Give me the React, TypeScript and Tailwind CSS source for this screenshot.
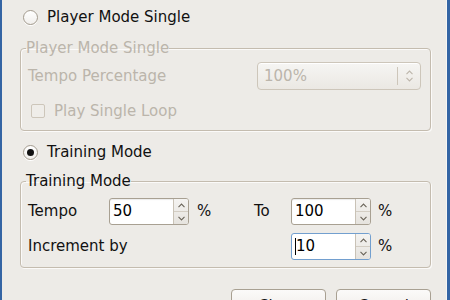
import type { ReactNode } from 'react';

function Radio({ checked }: { checked?: boolean }) {
  return (
    <span className="flex h-[15px] w-[15px] shrink-0 items-center justify-center rounded-full border border-[#a39b8e] bg-gradient-to-b from-white to-[#f1efec] shadow-[0_1px_0_#fff]">
      {checked ? <span className="h-[7px] w-[7px] rounded-full bg-[#111]" /> : null}
    </span>
  );
}

function Chevron({ up, color = '#6b655b' }: { up?: boolean; color?: string }) {
  return (
    <svg width="7" height="5" viewBox="0 0 7 5" className="block">
      <path
        d={up ? 'M0.5 4.2 L3.5 1 L6.5 4.2' : 'M0.5 0.8 L3.5 4 L6.5 0.8'}
        fill="none"
        stroke={color}
        strokeWidth="1.1"
      />
    </svg>
  );
}

function SpinBox({ value, focused }: { value: ReactNode; focused?: boolean }) {
  return (
    <div
      className={
        focused
          ? 'flex h-[27px] w-[80px] overflow-hidden rounded-[3px] border border-[#729fcf] bg-white'
          : 'flex h-[27px] w-[80px] overflow-hidden rounded-[3px] border border-[#a8a092] bg-white shadow-[inset_0_1px_1px_rgba(0,0,0,0.08)]'
      }
    >
      <div className="flex flex-1 items-center pl-[3px] text-black">{value}</div>
      <div className="flex w-[15px] flex-col border-l border-[#c9c2b6] bg-gradient-to-b from-[#f4f3f1] to-[#e6e3de]">
        <div className="flex flex-1 items-center justify-center border-b border-[#d3cdc3]">
          <Chevron up />
        </div>
        <div className="flex flex-1 items-center justify-center">
          <Chevron />
        </div>
      </div>
    </div>
  );
}

function Group({ title, disabled, children }: { title: string; disabled?: boolean; children: ReactNode }) {
  return (
    <fieldset className="rounded-[4px] border border-[#c4bcaf] shadow-[1px_1px_0_#fbfaf9,inset_1px_1px_0_#fbfaf9]">
      <legend className={disabled ? 'ml-[5px] leading-[16px] text-[#bbb5ab]' : 'ml-[5px] leading-[16px] text-[#111]'}>
        {title}
      </legend>
      {children}
    </fieldset>
  );
}

export default function App() {
  return (
    <div className="flex h-[300px] w-[450px] overflow-hidden bg-[#edebe7] font-['DejaVu_Sans',sans-serif] text-[15px] text-[#111]">
      <div className="w-[2px] shrink-0 bg-[#3465a4]" />

      <div className="flex flex-1 flex-col pl-[18px] pr-[15px]">
        <label className="mt-[10px] flex h-[14px] items-center gap-[9px] pl-[3px]">
          <Radio />
          <span>Player Mode Single</span>
        </label>

        <div className="mt-[16px]">
          <Group title="Player Mode Single" disabled>
            <div className="flex flex-col px-[7px] pb-[12px] pt-[6px] text-[#bbb5ab]">
              <div className="flex h-[28px] items-center justify-between pr-[2px]">
                <span>Tempo Percentage</span>
                <div className="flex h-[28px] w-[164px] items-center rounded-[4px] border border-[#cdc6ba] bg-gradient-to-b from-[#f6f5f3] to-[#ebe8e3] shadow-[inset_0_1px_0_#fff]">
                  <span className="flex-1 pl-[6px]">100%</span>
                  <span className="h-[18px] w-px bg-[#cdc6ba]" />
                  <span className="flex w-[22px] flex-col items-center gap-[2px]">
                    <Chevron up color="#bdb6ab" />
                    <Chevron color="#bdb6ab" />
                  </span>
                </div>
              </div>
              <label className="mt-[14px] flex h-[14px] items-center gap-[9px] pl-[3px]">
                <span className="h-[14px] w-[14px] shrink-0 rounded-[2px] border border-[#cdc6ba] bg-[#efede9]" />
                <span>Play Single Loop</span>
              </label>
            </div>
          </Group>
        </div>

        <label className="mt-[14px] flex h-[14px] items-center gap-[9px] pl-[3px]">
          <Radio checked />
          <span>Training Mode</span>
        </label>

        <div className="mt-[14px]">
          <Group title="Training Mode">
            <div className="grid grid-cols-[81px_80px_65px_37px_80px_auto] items-center gap-y-[8px] px-[7px] pb-[7px] pt-[9px]">
              <span>Tempo</span>
              <SpinBox value="50" />
              <span className="pl-[8px]">%</span>
              <span>To</span>
              <SpinBox value="100" />
              <span className="pl-[7px]">%</span>

              <span className="col-span-4">Increment by</span>
              <SpinBox
                focused
                value={
                  <span className="flex items-center">
                    <span className="h-[17px] w-px bg-black" />
                    <span>10</span>
                  </span>
                }
              />
              <span className="pl-[7px]">%</span>
            </div>
          </Group>
        </div>

        <div className="mt-[21px] flex justify-end gap-[10px]">
          <button className="flex h-[30px] w-[95px] items-start justify-center rounded-[4px] border border-[#a8a092] bg-gradient-to-b from-[#fbfaf9] to-[#ece9e4] pt-[5px] text-[#111]">
            Close
          </button>
          <button className="flex h-[30px] w-[95px] items-start justify-center rounded-[4px] border border-[#a8a092] bg-gradient-to-b from-[#fbfaf9] to-[#ece9e4] pt-[5px] text-[#111]">
            Cancel
          </button>
        </div>
      </div>

      <div className="w-px shrink-0 bg-[#f7f6f4]" />
      <div className="w-[3px] shrink-0 bg-[#3465a4]" />
    </div>
  );
}
